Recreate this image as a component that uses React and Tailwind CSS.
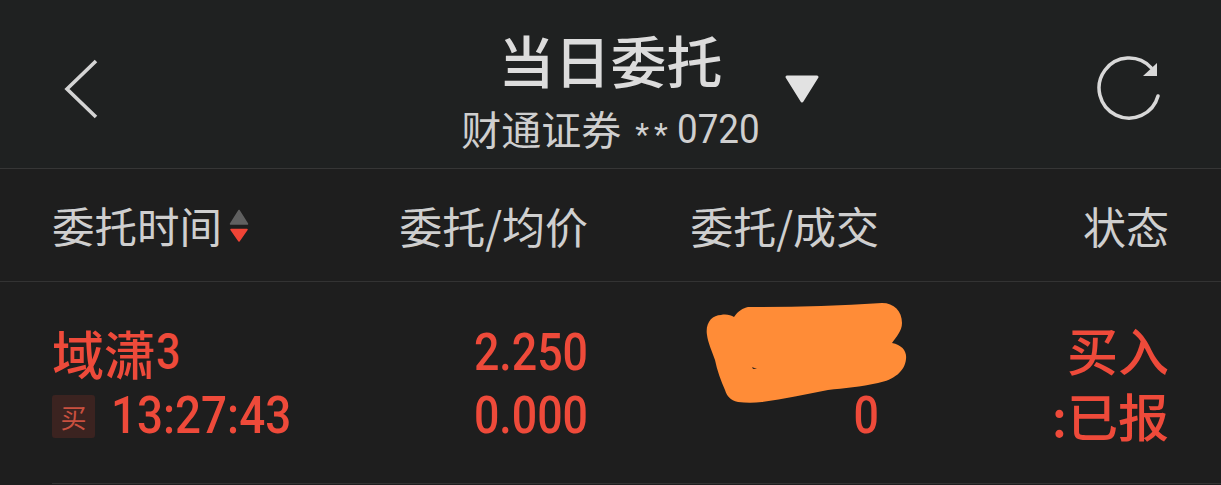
const cjk = "font-['Noto_Sans_CJK_SC',sans-serif]"

// digits in the app are a narrow DIN-like face, Roboto squeezed comes closest
function Num({ children, className = '' }) {
  return (
    <span className={`block font-['Roboto',sans-serif] font-medium ${className}`}>
      {children}
    </span>
  )
}

function SortArrows() {
  return (
    <svg width="20" height="34" viewBox="0 0 20 34" className="ml-[7px] mt-[2px]">
      <path d="M10 1.5 L18.5 15 H1.5 Z" fill="#606060" stroke="#606060" strokeWidth="1.5" strokeLinejoin="round" />
      <path d="M2 20.5 H18 L10 32 Z" fill="#f04436" stroke="#f04436" strokeWidth="1.5" strokeLinejoin="round" />
    </svg>
  )
}

function Blob() {
  return (
    <svg width="201" height="100" viewBox="0 0 201 100" className="absolute left-[706px] top-[303px]">
      <path
        d="M1 32 C-1 20 6 12 15 12 C20 11 25 12 28 14 C32 8 37 5 42 4 C85 4 130 3 176 0 C188 0 196 8 196 20 C196 28 190 34 186 40 C196 42 201 48 200 56 C199 68 188 77 172 80 C155 84 138 85 122 87 C100 91 78 96 56 99 C48 100 40 100 32 99 C24 97 21 93 19 87 C15 78 11 67 9 57 C6 48 2 40 1 32 Z"
        fill="#ff8c37"
      />
      <path d="M46 64 L51 66 L47 66 Z" fill="#3a2a1e" />
    </svg>
  )
}

export default function App() {
  return (
    <div className={`relative w-[1221px] h-[485px] overflow-hidden bg-[#1e1e1e] ${cjk}`}>
      {/* Header */}
      <div className="relative h-[169px] bg-[#1f2121] border-b border-[#363636] flex flex-col items-center">
        <svg width="40" height="66" viewBox="0 0 40 66" fill="none" className="absolute left-[61px] top-[56px]">
          <path d="M35 5 L6 33 L35 61" stroke="#d4d4d4" strokeWidth="3.6" />
        </svg>
        <div className="flex flex-col items-center">
          <h1 className="text-[56px] leading-[66px] mt-[26px] text-[#dcdcdc] font-medium">当日委托</h1>
          <p className="flex items-center text-[40px] leading-[48px] mt-[12px] text-[#cfcfcf] whitespace-nowrap">
            财通证券
            <span className="ml-[14px] font-['Roboto',sans-serif] text-[32px] tracking-[5px] translate-y-[6px]">**</span>
            <Num className="ml-[4px] -mr-[7px] font-normal scale-x-[0.92] origin-left translate-y-[2px]">0720</Num>
          </p>
        </div>
        <svg width="36" height="30" viewBox="0 0 36 30" className="absolute left-[784px] top-[74px]">
          <path d="M3 3 H33 L18 27 Z" fill="#e2e2e2" stroke="#e2e2e2" strokeWidth="3" strokeLinejoin="round" />
        </svg>
        <svg width="66" height="70" viewBox="0 0 66 70" className="absolute left-[1096px] top-[55px]" fill="none">
          <path d="M62 41 A30 30 0 1 1 55 12.6" stroke="#d8d8d8" strokeWidth="3.5" strokeLinecap="round" />
          <path d="M61 8 V21 H47 Z" fill="#d8d8d8" />
        </svg>
      </div>

      {/* Column titles */}
      <div className="h-[113px] border-b border-[#333333] pl-[53px] grid grid-cols-[260px_275px_291px_290px] items-center text-[43px] leading-[50px] text-[#cfcfcf]">
        <div className="flex items-center text-[42.5px] -ml-[1px]">
          委托时间
          <SortArrows />
        </div>
        <div className="text-right">委托/均价</div>
        <div className="text-right">委托/成交</div>
        <div className="text-right">状态</div>
      </div>

      {/* Order row */}
      <div className="ml-[52px] h-[202px] border-b border-[#333333]">
        <div className="pl-[1px] pt-[39px] grid grid-cols-[260px_275px_291px_290px] text-[#ee4a3a] leading-[63px]">
          <div>
            <div className="flex -ml-[1px] text-[52px] leading-[63px] font-medium whitespace-nowrap">
              域潇<Num className="text-[50px] scale-x-[0.86] origin-left">3</Num>
            </div>
            <div className="flex items-center h-[63px]">
              <span className="shrink-0 w-[43px] h-[43px] -ml-[1px] mt-[2px] rounded-[3px] bg-[#3b2320] text-[#c9503f] text-[26px] leading-[43px] text-center">买</span>
              <Num className="ml-[16px] text-[52px] whitespace-nowrap scale-x-[0.88] origin-left">13:27:43</Num>
            </div>
          </div>
          <div className="text-right text-[52px]">
            <Num className="scale-x-[0.86] origin-right">2.250</Num>
            <Num className="scale-x-[0.86] origin-right">0.000</Num>
          </div>
          <div className="text-right text-[52px]">
            <div className="h-[63px]" />
            <Num className="scale-x-[0.86] origin-right">0</Num>
          </div>
          <div className="flex flex-col gap-[3px] text-right text-[51px] font-medium -mt-[3px]">
            <div>买入</div>
            <div className="whitespace-nowrap">:已报</div>
          </div>
        </div>
      </div>

      <Blob />
    </div>
  )
}
